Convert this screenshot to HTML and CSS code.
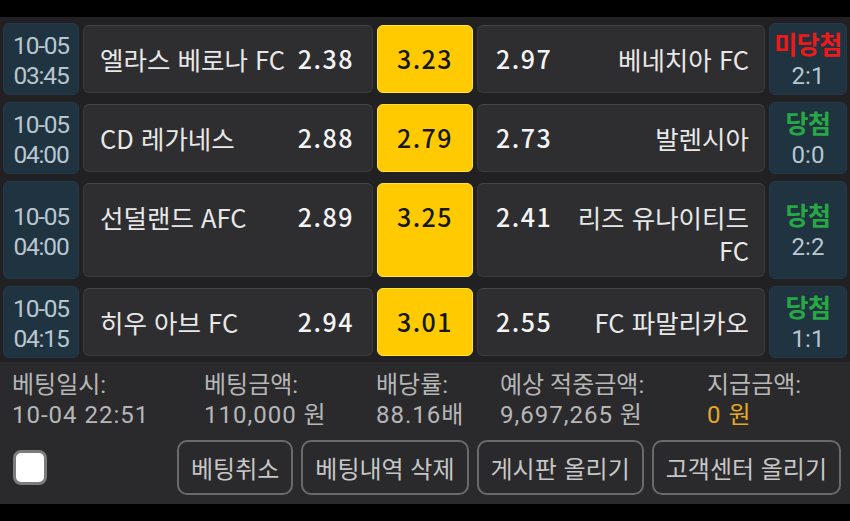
FILE: index.html
```html
<!DOCTYPE html>
<html lang="ko">
<head>
<meta charset="utf-8">
<title>베팅내역</title>
<link rel="stylesheet" href="styles.css">
</head>
<body>
<div class="status-bar"></div>
<main class="slip">
  <section class="games">
    <div class="game">
      <div class="kickoff"><span>10-05</span><span>03:45</span></div>
      <div class="team home"><span class="name">엘라스 베로나 FC</span><span class="odds">2.38</span></div>
      <div class="draw"><span class="odds">3.23</span></div>
      <div class="team away"><span class="odds">2.97</span><span class="name">베네치아 FC</span></div>
      <div class="result"><span class="lost">미당첨</span><span>2:1</span></div>
    </div>
    <div class="game">
      <div class="kickoff"><span>10-05</span><span>04:00</span></div>
      <div class="team home"><span class="name">CD 레가네스</span><span class="odds">2.88</span></div>
      <div class="draw"><span class="odds">2.79</span></div>
      <div class="team away"><span class="odds">2.73</span><span class="name">발렌시아</span></div>
      <div class="result"><span class="won">당첨</span><span>0:0</span></div>
    </div>
    <div class="game">
      <div class="kickoff"><span>10-05</span><span>04:00</span></div>
      <div class="team home"><span class="name">선덜랜드 AFC</span><span class="odds">2.89</span></div>
      <div class="draw"><span class="odds">3.25</span></div>
      <div class="team away"><span class="odds">2.41</span><span class="name">리즈 유나이티드 FC</span></div>
      <div class="result"><span class="won">당첨</span><span>2:2</span></div>
    </div>
    <div class="game">
      <div class="kickoff"><span>10-05</span><span>04:15</span></div>
      <div class="team home"><span class="name">히우 아브 FC</span><span class="odds">2.94</span></div>
      <div class="draw"><span class="odds">3.01</span></div>
      <div class="team away"><span class="odds">2.55</span><span class="name">FC 파말리카오</span></div>
      <div class="result"><span class="won">당첨</span><span>1:1</span></div>
    </div>
  </section>

  <section class="summary">
    <div class="stats">
      <div class="stat"><span class="label">베팅일시:</span><span class="value">10-04 22:51</span></div>
      <div class="stat"><span class="label">베팅금액:</span><span class="value">110,000 원</span></div>
      <div class="stat"><span class="label">배당률:</span><span class="value">88.16배</span></div>
      <div class="stat"><span class="label">예상 적중금액:</span><span class="value">9,697,265 원</span></div>
      <div class="stat"><span class="label">지급금액:</span><span class="value paid">0 원</span></div>
    </div>
    <div class="actions">
      <input type="checkbox" class="select" aria-label="선택">
      <div class="buttons">
        <button class="btn">베팅취소</button>
        <button class="btn">베팅내역 삭제</button>
        <button class="btn">게시판 올리기</button>
        <button class="btn">고객센터 올리기</button>
      </div>
    </div>
  </section>
</main>
<div class="nav-bar"></div>
</body>
</html>
```

FILE: styles.css
```css
* {
  box-sizing: border-box;
}

html, body {
  margin: 0;
  padding: 0;
  background: #000;
}

body {
  width: 850px;
  height: 521px;
  overflow: hidden;
  font-family: "Noto Sans CJK KR", "Noto Sans", sans-serif;
  color: #e6e6e6;
}

.status-bar {
  height: 17px;
  background: #000;
}

.nav-bar {
  height: 17px;
  background: #000;
}

.slip {
  background: #212123;
}

/* match rows */
.games {
  display: flex;
  flex-direction: column;
  gap: 7px;
  padding: 6px 3px 4px;
}

.game {
  display: grid;
  grid-template-columns: 76px 290px 96px 288px 78px;
  column-gap: 4px;
}

.kickoff,
.result {
  display: flex;
  flex-direction: column;
  justify-content: center;
  align-items: center;
  padding: 7px 0 3px;
  background: #1f3341;
  border: 1px solid #26394a;
  border-radius: 6px;
  color: #b9c6cf;
}

/* stacked two-line cells use compact digit metrics */
.kickoff span,
.result span,
.stat span {
  display: block;
  white-space: nowrap;
  font-family: Roboto, "Noto Sans CJK KR", sans-serif;
}

.kickoff span,
.result span {
  height: 30px;
  line-height: 30px;
}

.kickoff {
  font-size: 24.5px;
  letter-spacing: -1.2px;
}

.result {
  font-size: 24px;
}

.result .lost,
.result .won {
  font-size: 25px;
  font-weight: 700;
  letter-spacing: -0.5px;
}

.result .lost {
  color: #ee1a1a;
}

.result .won {
  color: #27a844;
}

.team {
  display: flex;
  align-items: flex-start;
  gap: 8px;
  margin: 2px 0;
  padding: 16px 18px 10px 16px;
  background: #2e2e30;
  border: 1px solid #3b3b3d;
  border-top-color: #464648;
  border-radius: 6px;
  line-height: 33px;
}

.team.away {
  padding: 16px 15px 10px 18px;
}

.name {
  flex: 1;
  font-size: 25.5px;
  color: #e8e8e8;
}

.away .name {
  text-align: right;
}

.odds {
  font-size: 25px;
  font-weight: 500;
  letter-spacing: 1.5px;
  color: #f4f4f4;
}

.draw {
  display: flex;
  justify-content: center;
  align-items: flex-start;
  margin: 2px 0;
  padding-top: 16px;
  background: #ffcb00;
  border: 1px solid #ffe23a;
  border-radius: 6px;
  line-height: 33px;
}

.draw .odds {
  color: #161616;
}

/* bet summary */
.summary {
  background: #2a2a2c;
  padding: 8px 9px 9px 12px;
}

.stats {
  display: grid;
  grid-template-columns: 192px 172px 124px 207px auto;
  font-size: 24px;
  color: #b6b6b6;
}

.stat {
  display: flex;
  flex-direction: column;
}

.stat span {
  height: 30px;
  line-height: 30px;
}

.value {
  letter-spacing: 1px;
}

.value.paid {
  color: #e6a824;
}

.actions {
  display: flex;
  align-items: center;
  margin-top: 10px;
}

.select {
  appearance: none;
  -webkit-appearance: none;
  margin: 0 0 0 1px;
  width: 34px;
  height: 35px;
  background: #fff;
  border: 3px solid #7c7c7c;
  border-radius: 8px;
}

.buttons {
  display: flex;
  gap: 8px;
  margin-left: auto;
}

.btn {
  height: 55px;
  padding: 0 12px;
  background: transparent;
  border: 2px solid #6a6a6a;
  border-radius: 10px;
  font-family: inherit;
  font-size: 24px;
  color: #c6c6c6;
}
```
